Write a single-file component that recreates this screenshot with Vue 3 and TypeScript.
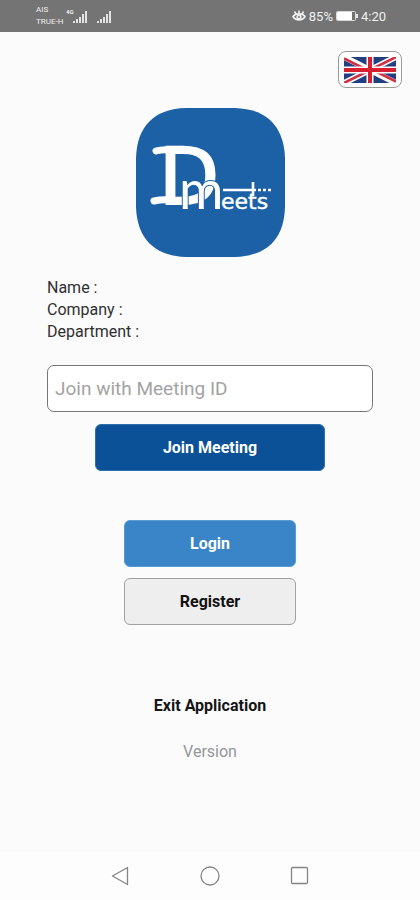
<script setup lang="ts">
import { ref } from 'vue'

const meetingId = ref('')
const profile: string[] = ['Name :', 'Company :', 'Department :']
</script>

<template>
  <div class="screen">
    <div class="status">
      <div class="carrier">
        <span class="names">AIS<br />TRUE-H</span>
        <svg class="signal" width="50" height="16" viewBox="0 0 50 16" aria-hidden="true">
          <text x="2" y="6" class="net">4G</text>
          <g fill="#e2e2e2">
            <path d="M9 13h2v2H9zM12 11h2v4h-2zM15 9h2v6h-2zM18 6h2v9h-2zM21 3h2v12h-2z" />
            <path d="M33 13h2v2h-2zM36 11h2v4h-2zM39 9h2v6h-2zM42 6h2v9h-2zM45 3h2v12h-2z" />
          </g>
        </svg>
      </div>
      <div class="power">
        <svg width="14" height="12" viewBox="0 0 14 12" fill="none" stroke="#f0f0f0" stroke-width="1.6" aria-hidden="true">
          <path d="M1 6.500C3.500 3 10.500 3 13 6.500C10.500 11 3.500 11 1 6.500ZM7 0.500V3.500M2.500 1.500L4 4M11.500 1.500L10 4" />
          <circle cx="7" cy="7" r="1.800" />
        </svg>
        <span>85%</span>
        <svg class="battery" width="22" height="10" viewBox="0 0 22 10" aria-hidden="true">
          <rect x="0.500" y="0.500" width="19" height="9" rx="1" fill="none" stroke="#d8d8d8" />
          <rect x="1" y="1" width="15" height="8" fill="#fff" />
          <rect x="20" y="3" width="2" height="4" fill="#e8e8e8" />
        </svg>
        <span>4:20</span>
      </div>
    </div>

    <main class="content">
      <button class="language" type="button" aria-label="English">
        <svg width="52" height="26" viewBox="0 0 52 26" aria-hidden="true">
          <rect width="52" height="26" fill="#223f82" />
          <path d="M0 0L52 26M52 0L0 26" stroke="#fff" stroke-width="6" />
          <path d="M0 1.500L23 13M52 24.500L29 13M52 0L27 12.500M0 26L25 13.500" stroke="#cf3146" stroke-width="2.6" />
          <path d="M26 0V26M0 13H52" stroke="#fff" stroke-width="7" />
          <path d="M26 0V26M0 13H52" stroke="#d71f30" stroke-width="4" />
        </svg>
      </button>

      <svg class="logo" width="149" height="149" viewBox="0 0 149 149" role="img" aria-label="D Meets">
        <path d="M50 0H99C132 1 148 20 149 50V99C148 132 130 148 99 149H50C18 148 1 130 0 99V50C1 18 18 1 50 0Z" fill="#1c61a5" />
        <path d="M20 43Q26 41 36 42M18 93Q26 91 36 92" fill="none" stroke="#fff" stroke-width="7" stroke-linecap="round" />
        <text x="23" y="96" class="mark-d">D</text>
        <text x="43" y="101" class="mark-m">m</text>
        <text x="85" y="101" class="mark-rest">eets</text>
        <path d="M87 82H120M117 74V88" fill="none" stroke="#fff" stroke-width="2.6" />
        <path d="M122 82h3M127 82h3M132 82h3" stroke="#fff" stroke-width="2.6" />
      </svg>

      <div class="form">
        <ul class="profile">
          <li v-for="line in profile" :key="line">{{ line }}</li>
        </ul>
        <input v-model="meetingId" class="field" type="text" placeholder="Join with Meeting ID" aria-label="Meeting ID" />
      </div>

      <button class="btn join" type="button">Join Meeting</button>
      <div class="account">
        <button class="btn login" type="button">Login</button>
        <button class="btn register" type="button">Register</button>
      </div>
      <button class="exit" type="button">Exit Application</button>
      <p class="version">Version</p>
    </main>

    <nav class="system">
      <button type="button" aria-label="Back">
        <svg width="20" height="20" viewBox="0 0 20 20"><path d="M2.500 10L17.500 1.500V18.500Z" /></svg>
      </button>
      <button type="button" aria-label="Home">
        <svg width="20" height="20" viewBox="0 0 20 20"><circle cx="10" cy="10" r="9" /></svg>
      </button>
      <button type="button" aria-label="Recent apps">
        <svg width="20" height="20" viewBox="0 0 20 20"><rect x="1.500" y="1.500" width="16" height="16" rx="1" /></svg>
      </button>
    </nav>
  </div>
</template>

<style>
body {
  margin: 0;
  background: #fbfbfb;
}
</style>

<style scoped>
.screen {
  display: flex;
  flex-direction: column;
  min-height: 100vh;
  background: #fbfbfb;
  color: #303030;
  font-family: Roboto, "Liberation Sans", sans-serif;
}
.status {
  display: flex;
  align-items: center;
  justify-content: space-between;
  box-sizing: border-box;
  height: 32px;
  padding: 0 34px 0 36px;
  background: #747474;
  color: #f0f0f0;
}
.carrier,
.power {
  display: flex;
  align-items: center;
}
.carrier {
  gap: 1px;
}
.power {
  gap: 3px;
  font-size: 13px;
}
.names {
  font-size: 8px;
  line-height: 12px;
}
.net {
  fill: #f0f0f0;
  font-size: 6px;
  font-weight: 700;
}
.content {
  display: flex;
  flex: 1;
  flex-direction: column;
  align-items: center;
  padding: 19px 18px 0;
}
button {
  font-family: inherit;
  cursor: pointer;
}
.language {
  display: flex;
  align-items: center;
  justify-content: center;
  align-self: flex-end;
  width: 64px;
  height: 37px;
  padding: 0;
  border: 1px solid #999;
  border-radius: 8px;
  background: #fff;
}
.logo {
  margin-top: 20px;
}
.mark-d {
  fill: #fff;
  stroke: #fff;
  stroke-width: 2px;
  font: 78px "DejaVu Sans", sans-serif;
}
.mark-m {
  fill: #fff;
  stroke: #1c61a5;
  stroke-width: 2px;
  paint-order: stroke;
  font: 54px Lato, sans-serif;
}
.mark-rest {
  fill: #fff;
  stroke: #fff;
  stroke-width: 0.4px;
  font: 22px "DejaVu Sans", sans-serif;
}
.form {
  align-self: stretch;
  padding: 0 29px;
}
.profile {
  margin: 20px 0 22px;
  padding: 0;
  list-style: none;
  font-size: 16px;
  line-height: 22px;
}
.field {
  box-sizing: border-box;
  width: 100%;
  height: 47px;
  padding: 0 7px;
  border: 1px solid #777;
  border-radius: 7px;
  background: #fff;
  color: #303030;
  font-family: inherit;
  font-size: 19px;
}
.field::placeholder {
  color: #a3a3a3;
  opacity: 1;
}
.btn {
  height: 47px;
  padding: 0;
  border: 1px solid transparent;
  border-radius: 6px;
  font-size: 16px;
  font-weight: 700;
}
.join {
  width: 60%;
  margin-top: 12px;
  border-color: #2f6fac;
  background: #0b5197;
  color: #fff;
}
.account {
  display: flex;
  flex-direction: column;
  gap: 11px;
  width: 45%;
  margin-top: 49px;
}
.login {
  border-color: #589bd2;
  background: #3985c7;
  color: #fff;
}
.register {
  border-color: #a0a0a0;
  background: #eee;
  color: #111;
}
.exit {
  margin-top: 70px;
  padding: 0;
  border: 0;
  background: none;
  color: #151515;
  font-size: 16px;
  font-weight: 700;
  line-height: 22px;
}
.version {
  margin: 24px 0;
  color: #92979a;
  font-size: 16px;
  line-height: 22px;
}
.system {
  display: flex;
  align-items: center;
  justify-content: center;
  gap: 70px;
  height: 48px;
  background: #fdfdfd;
}
.system button {
  display: flex;
  padding: 0;
  border: 0;
  background: none;
}
.system svg {
  fill: none;
  stroke: #858585;
  stroke-width: 1.3px;
  stroke-linejoin: round;
}
</style>
